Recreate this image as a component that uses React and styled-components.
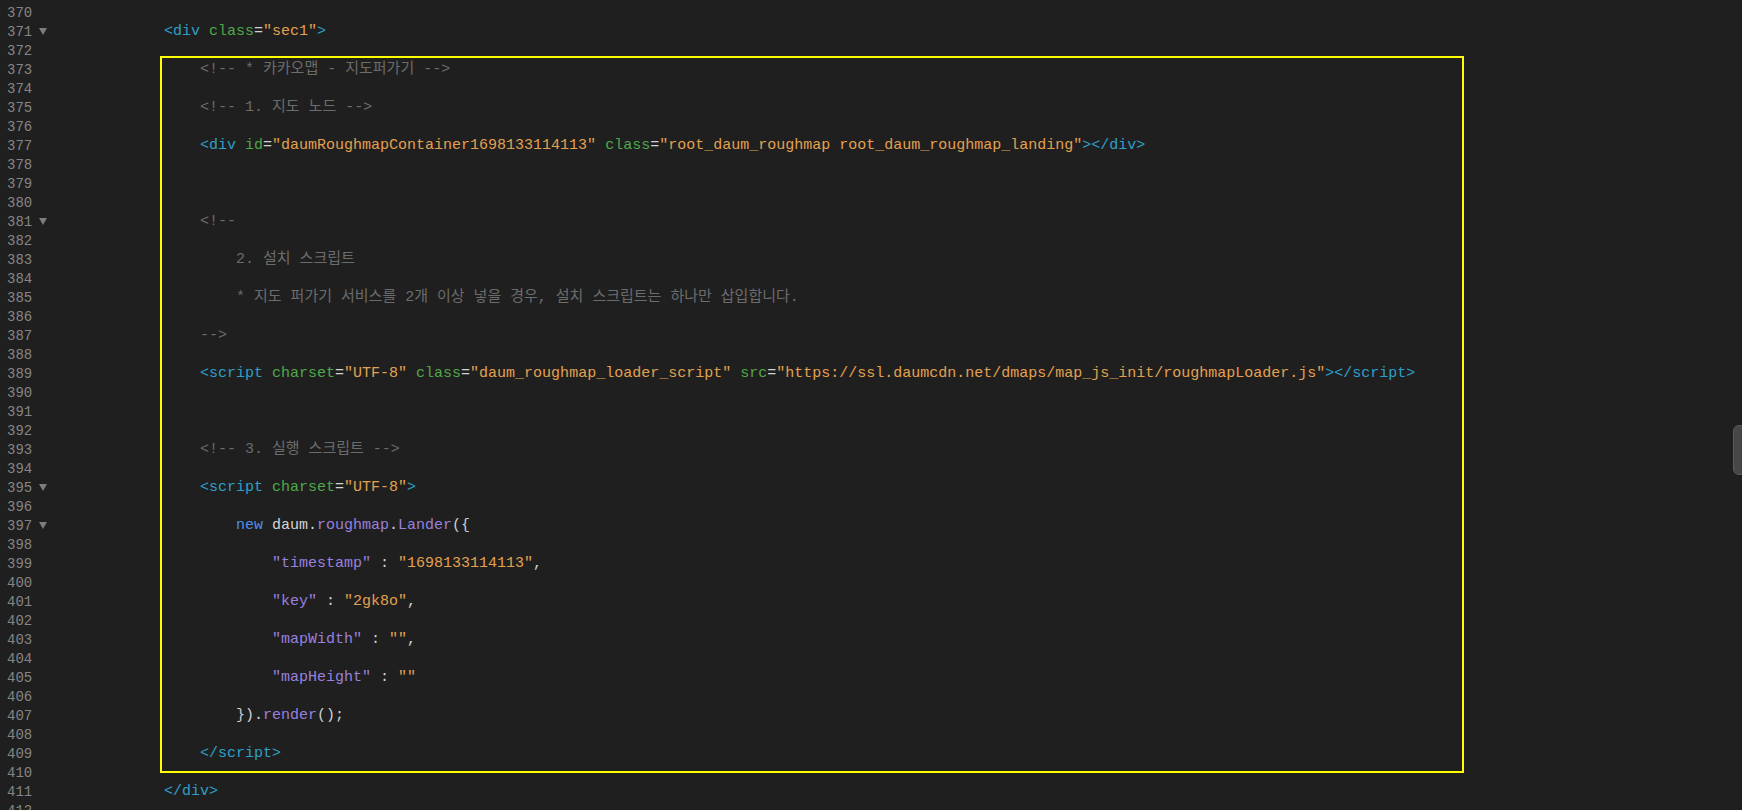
import React from 'react'
import styled, { createGlobalStyle } from 'styled-components'

const GlobalStyle = createGlobalStyle`
	html, body {
		margin: 0;
		padding: 0;
		background: #1f1f1f;
		overflow: hidden;
	}
`;

const colors = {
	tag: '#2e9fc9',
	attr: '#4fa84a',
	str: '#e3a150',
	comment: '#6c6c6c',
	plain: '#d4d4d4',
	keyword: '#4f8ee6',
	prop: '#9a80df',
	punct: '#cfcfcf',
};

// token helpers: [kind, text]
const tag = (t) => ['tag', t];
const attr = (t) => ['attr', t];
const str = (t) => ['str', t];
const com = (t) => ['comment', t];
const txt = (t) => ['plain', t];
const kw = (t) => ['keyword', t];
const prop = (t) => ['prop', t];
const pun = (t) => ['punct', t];

const lines = [
	{ n: 370 },
	{ n: 371, indent: 3, fold: true, tokens: [tag('<div '), attr('class'), txt('='), str('"sec1"'), tag('>')] },
	{ n: 372 },
	{ n: 373, indent: 4, tokens: [com('<!-- * 카카오맵 - 지도퍼가기 -->')] },
	{ n: 374 },
	{ n: 375, indent: 4, tokens: [com('<!-- 1. 지도 노드 -->')] },
	{ n: 376 },
	{
		n: 377,
		indent: 4,
		tokens: [
			tag('<div '),
			attr('id'),
			txt('='),
			str('"daumRoughmapContainer1698133114113"'),
			txt(' '),
			attr('class'),
			txt('='),
			str('"root_daum_roughmap root_daum_roughmap_landing"'),
			tag('></div>'),
		],
	},
	{ n: 378 },
	{ n: 379 },
	{ n: 380 },
	{ n: 381, indent: 4, fold: true, tokens: [com('<!--')] },
	{ n: 382 },
	{ n: 383, indent: 5, tokens: [com('2. 설치 스크립트')] },
	{ n: 384 },
	{ n: 385, indent: 5, tokens: [com('* 지도 퍼가기 서비스를 2개 이상 넣을 경우, 설치 스크립트는 하나만 삽입합니다.')] },
	{ n: 386 },
	{ n: 387, indent: 4, tokens: [com('-->')] },
	{ n: 388 },
	{
		n: 389,
		indent: 4,
		tokens: [
			tag('<script '),
			attr('charset'),
			txt('='),
			str('"UTF-8"'),
			txt(' '),
			attr('class'),
			txt('='),
			str('"daum_roughmap_loader_script"'),
			txt(' '),
			attr('src'),
			txt('='),
			str('"https://ssl.daumcdn.net/dmaps/map_js_init/roughmapLoader.js"'),
			tag('></script>'),
		],
	},
	{ n: 390 },
	{ n: 391 },
	{ n: 392 },
	{ n: 393, indent: 4, tokens: [com('<!-- 3. 실행 스크립트 -->')] },
	{ n: 394 },
	{ n: 395, indent: 4, fold: true, tokens: [tag('<script '), attr('charset'), txt('='), str('"UTF-8"'), tag('>')] },
	{ n: 396 },
	{
		n: 397,
		indent: 5,
		fold: true,
		tokens: [kw('new'), txt(' daum.'), prop('roughmap'), txt('.'), prop('Lander'), pun('({')],
	},
	{ n: 398 },
	{ n: 399, indent: 6, tokens: [prop('"timestamp"'), pun(' : '), str('"1698133114113"'), pun(',')] },
	{ n: 400 },
	{ n: 401, indent: 6, tokens: [prop('"key"'), pun(' : '), str('"2gk8o"'), pun(',')] },
	{ n: 402 },
	{ n: 403, indent: 6, tokens: [prop('"mapWidth"'), pun(' : '), str('""'), pun(',')] },
	{ n: 404 },
	{ n: 405, indent: 6, tokens: [prop('"mapHeight"'), pun(' : '), str('""')] },
	{ n: 406 },
	{ n: 407, indent: 5, tokens: [pun('})'), txt('.'), prop('render'), pun('();')] },
	{ n: 408 },
	{ n: 409, indent: 4, tokens: [tag('</script>')] },
	{ n: 410 },
	{ n: 411, indent: 3, tokens: [tag('</div>')] },
	{ n: 412 },
];

function App() {
	return (
		<>
			<GlobalStyle />
			<Editor>
				<Gutter>
					{lines.map((line) => (
						<LineNumber key={line.n}>
							<span>{line.n}</span>
							{line.fold && (
								<FoldMark viewBox="0 0 8 7">
									<polygon points="0,0 8,0 4,7" />
								</FoldMark>
							)}
						</LineNumber>
					))}
				</Gutter>
				<Code>
					{lines.map((line) => (
						<CodeLine key={line.n} $indent={line.indent || 0}>
							{(line.tokens || []).map(([kind, text], i) => (
								<Token key={i} $kind={kind}>
									{text}
								</Token>
							))}
						</CodeLine>
					))}
				</Code>
				<Highlight />
				<ScrollThumb />
			</Editor>
		</>
	);
}

const Editor = styled.div`
	position: relative;
	display: flex;
	align-items: flex-start;
	height: 810px;
	padding-top: 3px;
	box-sizing: border-box;
	overflow: hidden;
	background: #1f1f1f;
	font-family: 'Liberation Mono', 'Noto Sans CJK KR', monospace;
`;

const Gutter = styled.div`
	width: 56px;
	flex-shrink: 0;
	display: flex;
	flex-direction: column;
`;

const LineNumber = styled.div`
	height: 19px;
	flex-shrink: 0;
	display: flex;
	align-items: center;
	gap: 7px;
	padding-left: 7px;
	font-size: 14px;
	color: #858585;
`;

const FoldMark = styled.svg`
	width: 8px;
	height: 7px;
	fill: #7d7d7d;
`;

const Code = styled.div`
	flex: 1;
	display: flex;
	flex-direction: column;
`;

const CodeLine = styled.div`
	height: 19px;
	flex-shrink: 0;
	line-height: 19px;
	font-size: 15px;
	white-space: pre;
	padding-left: ${({ $indent }) => $indent * 36}px;
`;

const Token = styled.span`
	color: ${({ $kind }) => colors[$kind]};
`;

const Highlight = styled.div`
	position: absolute;
	left: 160px;
	top: 56px;
	width: 1304px;
	height: 717px;
	box-sizing: border-box;
	border: 2px solid #ffff00;
	pointer-events: none;
`;

const ScrollThumb = styled.div`
	position: absolute;
	right: -6px;
	top: 425px;
	width: 13px;
	height: 48px;
	border-radius: 6px;
	background: #474747;
	border: 1px solid #5a5a5a;
`;

export default App
